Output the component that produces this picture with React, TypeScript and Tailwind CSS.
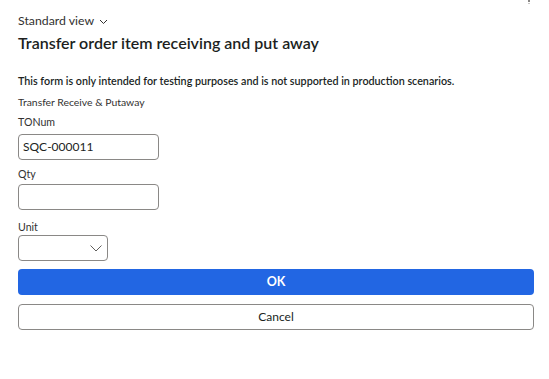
import React from "react";

export default function App() {
  return (
    <div className="relative w-[549px] h-[379px] bg-white text-[#201f1e]" style={{ fontFamily: 'Lato, "Noto Sans", sans-serif' }}>
      <div className="absolute left-[528px] top-0 flex flex-col gap-[1px]">
        <div className="w-[2px] h-[2px] bg-[#8a8886]" />
        <div className="w-[2px] h-[1px] bg-[#c8c6c4]" />
      </div>
      <div className="px-[18px] pt-[12px]">
        <div className="flex items-center gap-[5px] text-[12.3px] leading-[18px] text-[#323130]">
          <span>Standard view</span>
          <svg width="9" height="9" viewBox="0 0 9 9" fill="none" stroke="#323130" strokeWidth="1">
            <path d="M1 3 L4.5 6.5 L8 3" />
          </svg>
        </div>
        <h1 className="mt-[1px] text-[16px] leading-[24px] font-semibold text-[#201f1e]">
          Transfer order item receiving and put away
        </h1>
        <p className="mt-[19px] text-[10.75px] leading-[14px] font-semibold text-[#201f1e] whitespace-nowrap">
          This form is only intended for testing purposes and is not supported in production scenarios.
        </p>
        <p className="mt-[7px] text-[10.4px] leading-[14px] text-[#323130]">Transfer Receive &amp; Putaway</p>
        <label className="block mt-[6px] text-[10.6px] leading-[14px] text-[#323130]">TONum</label>
        <div className="mt-[5px] w-[141px] h-[26px] rounded-[4px] border border-[#8a8886] flex items-center px-[4px] text-[12px] text-[#201f1e]">
          SQC-000011
        </div>
        <label className="block mt-[7px] text-[10.6px] leading-[14px] text-[#323130]">Qty</label>
        <div className="mt-[3px] w-[141px] h-[26px] rounded-[4px] border border-[#8a8886]" />
        <label className="block mt-[10px] text-[10.6px] leading-[14px] text-[#323130]">Unit</label>
        <div className="mt-[1px] w-[90px] h-[26px] rounded-[4px] border border-[#8a8886] flex items-center justify-end pr-[4px]">
          <svg width="14" height="10" viewBox="0 0 14 10" fill="none" stroke="#605e5c" strokeWidth="1">
            <path d="M1.5 2.5 L7 8 L12.5 2.5" />
          </svg>
        </div>
        <button className="mt-[8px] w-[516px] h-[26px] rounded-[4px] bg-[#2266e3] text-white text-[12.5px] font-bold flex items-center justify-center">
          OK
        </button>
        <button className="mt-[9px] w-[516px] h-[26px] rounded-[4px] border border-[#8a8886] bg-white text-[12px] text-[#201f1e] flex items-center justify-center">
          Cancel
        </button>
      </div>
    </div>
  );
}
